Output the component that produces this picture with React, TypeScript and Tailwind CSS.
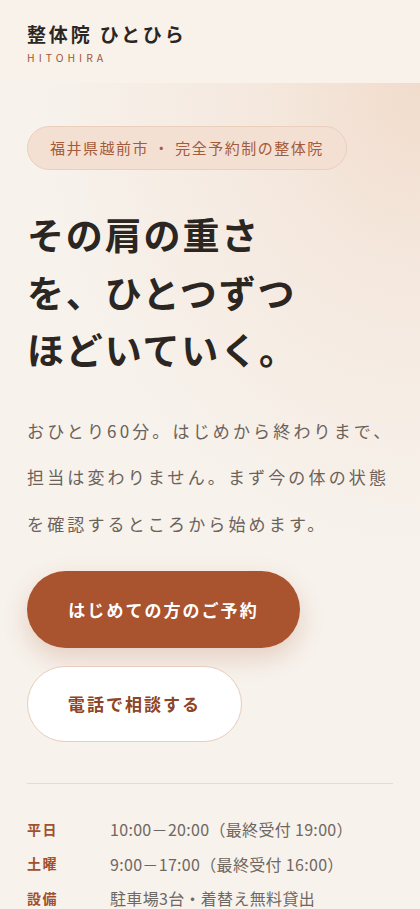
import React from "react";

const font = {
  fontFamily: '"Noto Sans CJK JP", "Noto Sans", sans-serif',
};

const hours = [
  { label: "平日", value: "10:00－20:00（最終受付 19:00）" },
  { label: "土曜", value: "9:00－17:00（最終受付 16:00）" },
  { label: "設備", value: "駐車場3台・着替え無料貸出" },
];

const App: React.FC = () => {
  return (
    <div
      className="min-h-[909px] bg-[#f7f2ec] text-[#2b2622]"
      style={font}
    >
      {/* ヘッダー */}
      <header className="h-[83px] bg-[#f8f2eb] px-[27px] pt-[20px]">
        <div className="text-[19px] font-bold leading-[28px] tracking-[0.15em] text-[#2b2622]">
          整体院 ひとひら
        </div>
        <div className="mt-[3px] text-[10.5px] leading-[14px] tracking-[0.38em] text-[#a0583a]">
          HITOHIRA
        </div>
      </header>

      {/* ヒーロー */}
      <main className="bg-[radial-gradient(ellipse_90%_55%_at_100%_0%,#f1dccc_0%,#f5e9df_45%,#f7f2ec_100%)] px-[27px] pt-[43px] pb-[10px]">
        <div className="inline-flex h-[44px] items-center rounded-full border border-[#ebcfbd] bg-[#f3e0d3] px-[22px] text-[15px] tracking-[0.1em] text-[#a55a3a]">
          福井県越前市 ・ 完全予約制の整体院
        </div>

        <h1 className="mt-[36px] text-[37px] font-bold leading-[57.5px] tracking-[0.05em] text-[#2b2622]">
          その肩の重さ
          <br />
          を、ひとつずつ
          <br />
          ほどいていく。
        </h1>

        <p className="mt-[29px] whitespace-nowrap text-[17px] leading-[46.5px] tracking-[0.185em] text-[#6a625b]">
          おひとり60分。はじめから終わりまで、
          <br />
          担当は変わりません。まず今の体の状態
          <br />
          を確認するところから始めます。
        </p>

        <div className="mt-[24px] flex flex-col items-start gap-[18px]">
          <button className="h-[77px] w-[273px] rounded-full bg-[#a9532f] text-[17px] font-bold tracking-[0.12em] text-white shadow-[0_10px_24px_rgba(169,83,47,0.22)]">
            はじめての方のご予約
          </button>
          <button className="h-[76px] w-[215px] rounded-full border border-[#e8cdbc] bg-white text-[17px] font-bold tracking-[0.12em] text-[#8c4526]">
            電話で相談する
          </button>
        </div>

        <div className="mt-[41px] border-t border-[#e4dbd1]" />

        <dl className="pt-[28px]">
          {hours.map((h) => (
            <div key={h.label} className="flex items-center h-[34.5px]">
              <dt className="w-[83px] text-[14px] font-bold tracking-[0.1em] text-[#a14f2c]">
                {h.label}
              </dt>
              <dd className="text-[16px] tracking-[0.02em] text-[#6f6862]">
                {h.value}
              </dd>
            </div>
          ))}
        </dl>
      </main>
    </div>
  );
};

export default App;
